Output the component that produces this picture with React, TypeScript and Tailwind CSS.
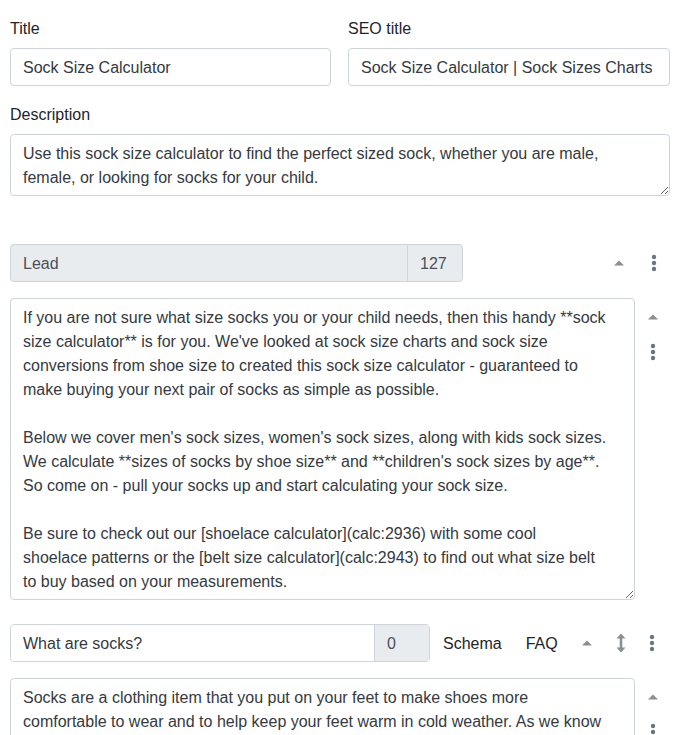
import React from "react";

const font = { fontFamily: '"Liberation Sans", Arial, sans-serif' };

function CaretUp() {
  return (
    <svg width="10" height="6" viewBox="0 0 10 6" className="block">
      <polygon points="0,5.5 5,0.5 10,5.5" fill="#8a8f94" />
    </svg>
  );
}

function Dots() {
  return (
    <svg width="6" height="18" viewBox="0 0 6 18" className="block">
      <circle cx="3" cy="3" r="2.2" fill="#6c757d" />
      <circle cx="3" cy="9" r="2.2" fill="#6c757d" />
      <circle cx="3" cy="15" r="2.2" fill="#6c757d" />
    </svg>
  );
}

function UpDown() {
  return (
    <svg width="10" height="20" viewBox="0 0 10 20" className="block">
      <polygon points="5,0.5 9.5,5.5 6.3,5.5 6.3,14.5 9.5,14.5 5,19.5 0.5,14.5 3.7,14.5 3.7,5.5 0.5,5.5" fill="#8a8f94" />
    </svg>
  );
}

const lead = [
  "If you are not sure what size socks you or your child needs, then this handy **sock",
  "size calculator** is for you. We've looked at sock size charts and sock size",
  "conversions from shoe size to created this sock size calculator - guaranteed to",
  "make buying your next pair of socks as simple as possible.",
  "",
  "Below we cover men's sock sizes, women's sock sizes, along with kids sock sizes.",
  "We calculate **sizes of socks by shoe size** and **children's sock sizes by age**.",
  "So come on - pull your socks up and start calculating your sock size.",
  "",
  "Be sure to check out our [shoelace calculator](calc:2936) with some cool",
  "shoelace patterns or the [belt size calculator](calc:2943) to find out what size belt",
  "to buy based on your measurements.",
].join("\n");

const socks = [
  "Socks are a clothing item that you put on your feet to make shoes more",
  "comfortable to wear and to help keep your feet warm in cold weather. As we know",
  "them today, socks are usually made from cotton, wool, nylon or a blend of these",
  "materials.",
].join("\n");

const desc = [
  "Use this sock size calculator to find the perfect sized sock, whether you are male,",
  "female, or looking for socks for your child.",
].join("\n");

const inputCls =
  "block h-[38px] rounded-[4px] border border-[#ced4da] bg-white px-3 pt-[2px] text-[16px] text-[#343a40] outline-none";
const taCls =
  "block rounded-[4px] border border-[#ced4da] bg-white px-3 pt-[7px] pb-[5px] text-[16px] leading-[24px] text-[#343a40] outline-none overflow-hidden whitespace-pre";

export default function App() {
  return (
    <div className="min-h-[735px] bg-white pl-[10px] pt-[16px] text-[16px] text-[#212529]" style={font}>
      <div className="w-[660px]">
        <div className="flex gap-[17px]">
          <div className="w-[321px]">
            <label className="block h-[24px] pt-[1px] leading-[24px] mb-[8px]">Title</label>
            <input className={inputCls + " w-full"} defaultValue="Sock Size Calculator" style={font} />
          </div>
          <div className="w-[322px]">
            <label className="block h-[24px] pt-[1px] leading-[24px] mb-[8px]">SEO title</label>
            <input className={inputCls + " w-full"} defaultValue="Sock Size Calculator | Sock Sizes Charts" style={font} />
          </div>
        </div>

        <label className="mt-[16px] block h-[24px] pt-[1px] leading-[24px] mb-[8px]">Description</label>
        <textarea
          className={taCls + " h-[62px] w-[660px]"}
          wrap="off"
          defaultValue={desc}
          style={{ ...font, resize: "vertical" }}
        />

        {/* Lead row */}
        <div className="mt-[48px] flex h-[38px] items-center">
          <div className="flex h-[38px] w-[453px] rounded-[4px] border border-[#ced4da] bg-[#e9ecef]">
            <div className="flex flex-1 items-center px-3 pt-[2px] text-[#495057]">Lead</div>
            <div className="flex w-[55px] items-center border-l border-[#ced4da] px-3 pt-[2px] text-[#495057]">127</div>
          </div>
          <div className="ml-[151px] flex w-[10px] justify-center">
            <CaretUp />
          </div>
          <div className="ml-[27px] flex w-[6px] justify-center">
            <Dots />
          </div>
        </div>

        <div className="mt-[16px] flex">
          <textarea
            className={taCls + " h-[302px] w-[625px]"}
            wrap="off"
            defaultValue={lead}
            style={{ ...font, resize: "vertical" }}
          />
          <div className="flex w-[35px] flex-col items-center pt-[16px]">
            <CaretUp />
            <div className="mt-[23px]">
              <Dots />
            </div>
          </div>
        </div>

        {/* FAQ row */}
        <div className="mt-[24px] flex h-[38px] items-center">
          <div className="flex h-[38px] w-[420px] rounded-[4px] border border-[#ced4da]">
            <input
              className="h-full flex-1 rounded-l-[4px] bg-white px-3 pt-[2px] text-[16px] text-[#343a40] outline-none"
              defaultValue="What are socks?"
              style={font}
            />
            <div className="flex w-[55px] items-center border-l border-[#ced4da] bg-[#e9ecef] px-3 pt-[2px] text-[#495057]">0</div>
          </div>
          <span className="ml-[13px] pt-[2px]">Schema</span>
          <span className="ml-[24px] pt-[2px]">FAQ</span>
          <div className="ml-[24px] flex w-[10px] justify-center">
            <CaretUp />
          </div>
          <div className="ml-[24px] flex w-[10px] justify-center">
            <UpDown />
          </div>
          <div className="ml-[23px] flex w-[6px] justify-center">
            <Dots />
          </div>
        </div>

        <div className="mt-[16px] flex">
          <textarea
            className={taCls + " h-[110px] w-[625px]"}
            wrap="off"
            defaultValue={socks}
            style={{ ...font, resize: "vertical" }}
          />
          <div className="flex w-[35px] flex-col items-center pt-[16px]">
            <CaretUp />
            <div className="mt-[23px]">
              <Dots />
            </div>
          </div>
        </div>
      </div>
    </div>
  );
}
